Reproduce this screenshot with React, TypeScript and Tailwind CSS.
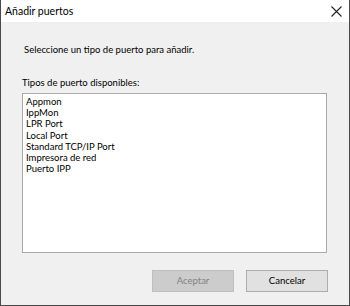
import React from 'react';

const ports = ['Appmon', 'IppMon', 'LPR Port', 'Local Port', 'Standard TCP/IP Port', 'Impresora de red', 'Puerto IPP'];

export default function App() {
  return (
    <div
      className="w-[350px] h-[306px] flex flex-col bg-[#f0f0f0] border-x border-b border-[#4a4a4a] text-black"
      style={{ fontFamily: 'Lato, "Noto Sans", sans-serif' }}
    >
      {/* title bar */}
      <div className="h-[22px] bg-white flex items-center justify-between pl-[4px] pr-[6px] shrink-0">
        <span className="text-[10.5px] leading-none">Añadir puertos</span>
        <svg width="11" height="11" viewBox="0 0 11 11" className="mr-[1px]">
          <path d="M0.5 0.5 L10.5 10.5 M10.5 0.5 L0.5 10.5" stroke="#222" strokeWidth="1.1" fill="none" />
        </svg>
      </div>

      <div className="flex-1 flex flex-col px-[21px]">
        <p className="mt-[21px] ml-[2px] text-[9.5px] leading-[14px]">Seleccione un tipo de puerto para añadir.</p>
        <p className="mt-[19px] text-[9.5px] leading-[14px]">Tipos de puerto disponibles:</p>

        <ul className="mt-[3px] h-[160px] bg-white border border-[#a9a9a9] pl-[3px] pt-[2px] text-[9.5px] leading-[11.2px] mr-[1px]">
          {ports.map((p) => (
            <li key={p}>{p}</li>
          ))}
        </ul>

        <div className="flex justify-end gap-[12px] mt-[17px]">
          <button className="w-[82px] h-[22px] bg-[#cccccc] border border-[#bfbfbf] text-[9.5px] text-[#838383]">
            Aceptar
          </button>
          <button className="w-[82px] h-[22px] bg-[#e1e1e1] border border-[#adadad] text-[9.5px]">
            Cancelar
          </button>
        </div>
      </div>
    </div>
  );
}
